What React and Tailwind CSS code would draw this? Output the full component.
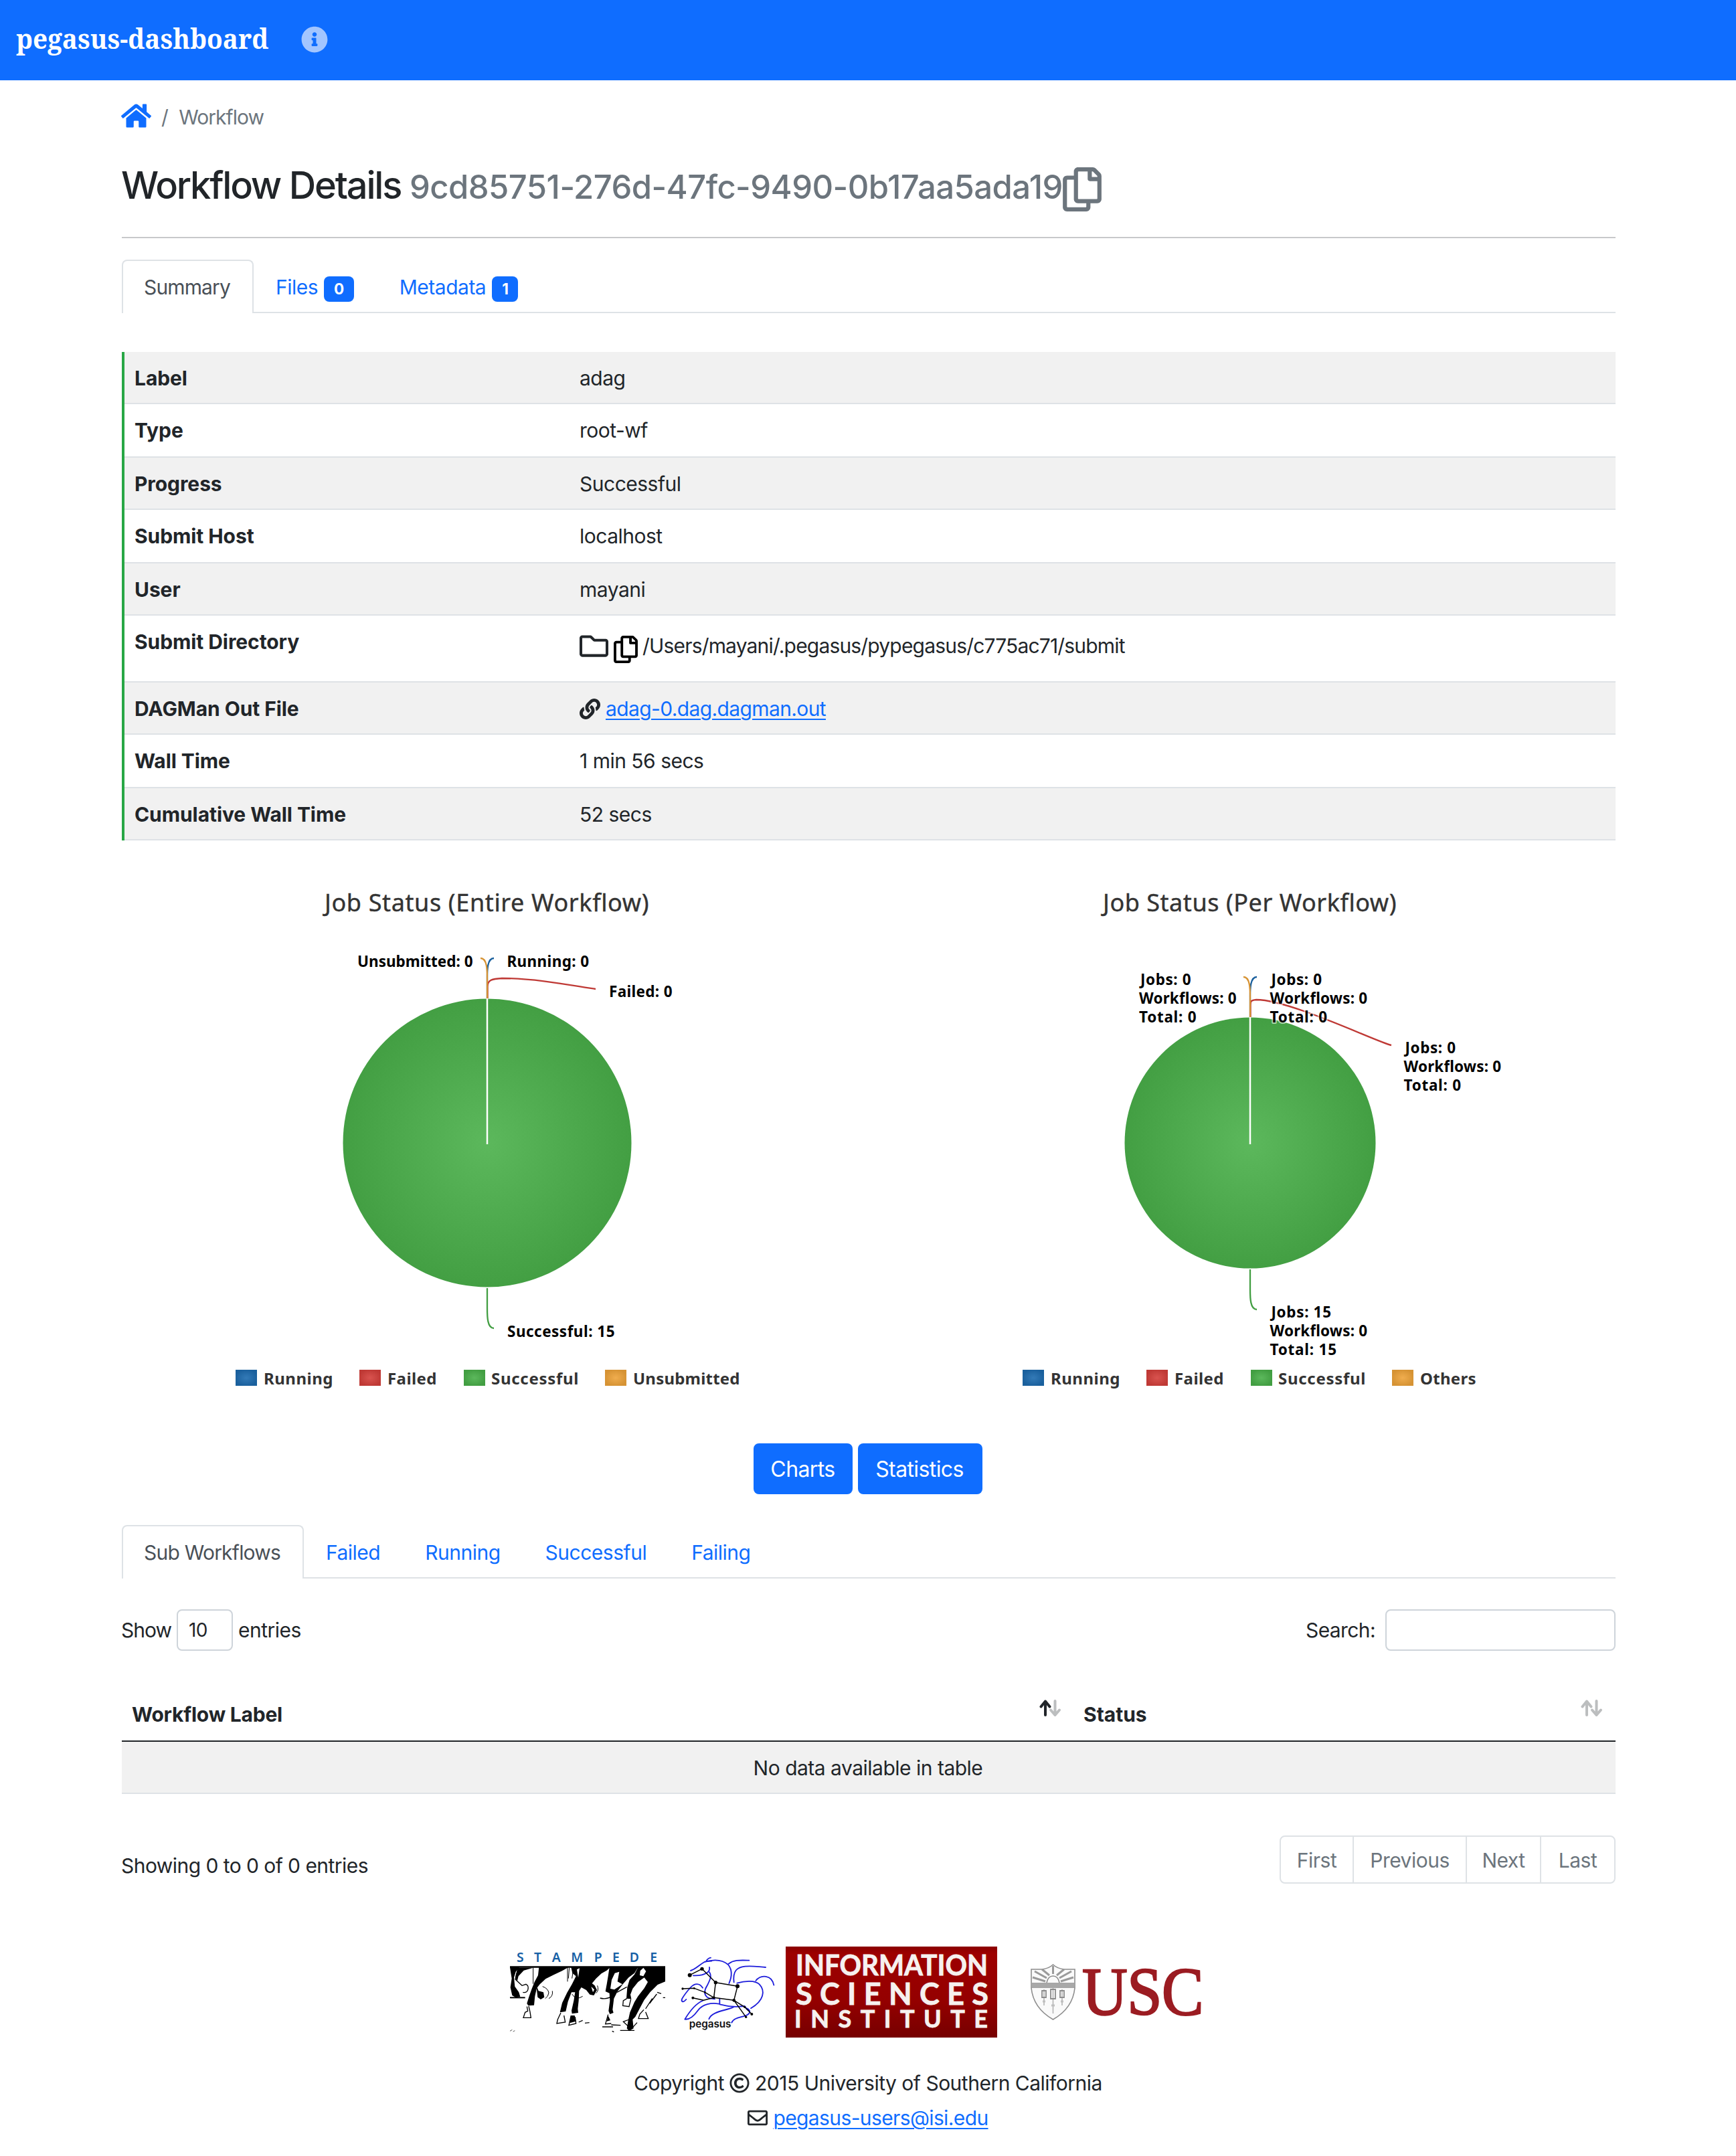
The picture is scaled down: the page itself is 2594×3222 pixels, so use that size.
import { FaInfoCircle, FaHome, FaRegCopy, FaRegFolder, FaLink, FaRegCopyright, FaRegEnvelope } from "react-icons/fa";

const details = [
  { label: "Label", value: "adag", h: "h-[78px]" },
  { label: "Type", value: "root-wf", h: "h-[80px]" },
  { label: "Progress", value: "Successful", h: "h-[78px]" },
  { label: "Submit Host", value: "localhost", h: "h-[80px]" },
  { label: "User", value: "mayani", h: "h-[78px]" },
  { label: "Submit Directory", kind: "dir", value: "/Users/mayani/.pegasus/pypegasus/c775ac71/submit", h: "h-[100px]" },
  { label: "DAGMan Out File", kind: "link", value: "adag-0.dag.dagman.out", h: "h-[78px]" },
  { label: "Wall Time", value: "1 min 56 secs", h: "h-[80px]" },
  { label: "Cumulative Wall Time", value: "52 secs", h: "h-[78px]" },
];

function DetailValue({ row }) {
  if (row.kind === "dir") {
    return (
      <div className="mt-[6px] flex h-[45px] items-center self-start">
        <FaRegFolder className="size-[43px]" />
        <FaRegCopy className="ml-[8px] h-[41px] w-[36px] translate-y-[5px] text-black" />
        <span className="ml-[7px] tracking-[-0.820px]">{row.value}</span>
      </div>
    );
  }
  if (row.kind === "link") {
    return (
      <div className="flex h-[45px] items-center self-start">
        <FaLink className="size-[31px]" />
        <a className="ml-[8px] tracking-[-0.620px] text-[#0f6dff] underline decoration-2 underline-offset-[4px]">{row.value}</a>
      </div>
    );
  }
  return <div>{row.value}</div>;
}

function DetailsTable() {
  return (
    <div className="mt-[58px]">
      {details.map((row, i) => (
        <div
          key={row.label}
          className={`flex border-l-4 border-l-[#28a745] ${row.h} ${i % 2 === 0 ? "bg-[#f1f1f1]" : "bg-white"}`}
        >
          <div className="flex w-full border-b-2 border-[#dee2e6] pt-[17px] pl-[15px]">
            <div className="w-[665px] shrink-0 font-bold tracking-[-0.080px]">{row.label}</div>
            <DetailValue row={row} />
          </div>
        </div>
      ))}
    </div>
  );
}

function Gradients({ id }) {
  const stops = { blue: ["#337ab7", "#1a609d"], red: ["#d9534f", "#bf3935"], green: ["#5cb85c", "#429e42"], orange: ["#f0ad4e", "#d69334"] };
  return (
    <defs>
      {Object.entries(stops).map(([name, [a, b]]) => (
        <radialGradient key={name} id={`${id}-${name}`} cx="0.5" cy="0.5" r="0.52">
          <stop offset="0" stopColor={a} />
          <stop offset="1" stopColor={b} />
        </radialGradient>
      ))}
    </defs>
  );
}

function ChartLabel({ x, y, w, children }) {
  return (
    <text x={x} y={y} textLength={w} fontSize="22.5" fontWeight="700" fill="#000" stroke="#fff" strokeOpacity="0.55" strokeWidth="4" paintOrder="stroke" strokeLinejoin="round">
      {children}
    </text>
  );
}

function Legend({ id, items }) {
  return items.map(([color, label, sx, tx, w]) => (
    <g key={label}>
      <rect x={sx} y="339" width="32" height="24" fill={`url(#${id}-${color})`} />
      <text x={tx} y="361" textLength={w} fontSize="24" fontWeight="700" fill="#333">{label}</text>
    </g>
  ));
}

/* Both charts use the centre of the pie as their origin. */
function Chart({ id, title, titleX, titleW, r, children, connectors, legend }) {
  return (
    <svg viewBox="-546 -452 1092 861" className="h-[861px] w-[1092px] font-['Noto_Sans',sans-serif]">
      <Gradients id={id} />
      <text x={titleX} y="-346" textLength={titleW} fontSize="36" fill="#333" stroke="#333" strokeWidth="0.400">{title}</text>
      <circle cx="0" cy="0" r={r} fill={`url(#${id}-green)`} />
      <line x1="0" y1={-r - 1} x2="0" y2="2" stroke="#fff" strokeWidth="2.5" />
      <g fill="none" strokeWidth="2.300">{connectors}</g>
      {children}
      <Legend id={id} items={legend} />
    </svg>
  );
}

function Charts() {
  return (
    <div className="grid grid-cols-2 gap-12">
      <Chart
        id="entire" title="Job Status (Entire Workflow)" titleX="-243" titleW="484" r="215.5"
        connectors={
          <>
            <path d="M10 -276C0 -276 0 -258 0 -246L0 -216" stroke="#1a609d" />
            <path d="M162 -230C142 -232 80 -246 22 -246C8 -245 0.500 -244 0.500 -234L0.500 -216" stroke="#bf3935" />
            <path d="M0 217L0 247C0 259 0 277 10 277" stroke="#429e42" />
            <path d="M-10 -276C0 -276 0 -258 0 -246L0 -216" stroke="#d69334" />
          </>
        }
        legend={[
          ["blue", "Running", -376, -334, 103],
          ["red", "Failed", -191, -149, 73],
          ["green", "Successful", -35, 6, 130],
          ["orange", "Unsubmitted", 176, 218, 159],
        ]}
      >
        <ChartLabel x="-194" y="-263.500" w="172">Unsubmitted: 0</ChartLabel>
        <ChartLabel x="29.500" y="-263.500" w="122">Running: 0</ChartLabel>
        <ChartLabel x="182" y="-218" w="94">Failed: 0</ChartLabel>
        <ChartLabel x="30" y="289.500" w="160">Successful: 15</ChartLabel>
      </Chart>
      <Chart
        id="per" title="Job Status (Per Workflow)" titleX="-220" titleW="438" r="187.5"
        connectors={
          <>
            <path d="M10 -248C0 -248 0 -230 0 -218L0 -188" stroke="#1a609d" />
            <path d="M211 -146C191 -150 60 -214 9 -214C1 -213 0.500 -212 0.500 -206L0.500 -188" stroke="#bf3935" />
            <path d="M0 189L0 219C0 231 0 249 10 249" stroke="#429e42" />
            <path d="M-10 -248C0 -248 0 -230 0 -218L0 -188" stroke="#d69334" />
          </>
        }
        legend={[
          ["blue", "Running", -340, -298, 103],
          ["red", "Failed", -155, -113, 73],
          ["green", "Successful", 1, 42, 130],
          ["orange", "Others", 212, 254, 83],
        ]}
      >
        {[[-166, -236, 0], [29.5, -236, 0], [229.5, -134, 0], [29.5, 261, 15]].map(([x, y, n]) => (
          <g key={`${x}:${y}`}>
            <ChartLabel x={x + 2} y={y} w={n ? 89 : 75}>{`Jobs: ${n}`}</ChartLabel>
            <ChartLabel x={x} y={y + 28} w="145">Workflows: 0</ChartLabel>
            <ChartLabel x={x} y={y + 56} w={n ? 99 : 85}>{`Total: ${n}`}</ChartLabel>
          </g>
        ))}
      </Chart>
    </div>
  );
}

function Badge({ children }) {
  return (
    <span className="flex h-[38px] items-center justify-center rounded-lg bg-[#0f6dff] px-[15px] text-[22.500px] leading-none font-bold text-white">
      {children}
    </span>
  );
}

function Tabs({ active, activeWidth, children }) {
  return (
    <div className="flex h-[80px]">
      <div className={`shrink-0 rounded-t-lg border-2 border-b-0 border-[#dee2e6] pt-[17px] pl-[31px] text-[#495057] ${activeWidth}`}>{active}</div>
      <div className="flex grow border-b-2 border-[#dee2e6] pt-[19px] text-[#0f6dff]">{children}</div>
    </div>
  );
}

function SortArrows({ up }) {
  return (
    <svg viewBox="0 0 36 26" className="h-[26px] w-[36px]" fill="none" strokeWidth="4" strokeLinecap="round" strokeLinejoin="round">
      <path d="M24.500 2V23M18 15.500L24.500 23L31 15.500" stroke="#bcbebf" />
      <path d="M10 23V2.500M3.500 10.500L10 2.500L16.500 10.500" stroke={up ? "#212529" : "#bcbebf"} />
    </svg>
  );
}

function StampedeLogo() {
  return (
    <svg viewBox="66 57 726 408" className="h-[136px] w-[242px]">
      <g fill="#1660a5" fontSize="58" fontWeight="600" className="font-['Noto_Sans',sans-serif]">
        {[["S", 96], ["T", 174], ["A", 254], ["M", 340], ["P", 443], ["E", 525], ["D", 602], ["E", 694]].map(([c, x]) => (
          <text key={x} x={x} y="125">{c}</text>
        ))}
      </g>
      <g fill="#000">
        <path d="M66 145H762V152H66Z" />
        <path d="M66 150H108L92 170L84 196L88 236L106 262L112 282L92 286L76 276L68 240L74 200Z" />
        <path d="M100 152H170L128 164L104 190L98 214L90 196Z" />
        <path d="M196 150H328L300 166L262 184L226 202L200 226L186 244L178 280L176 300L174 320L148 322L142 312L152 280L164 246L176 216L192 186Z" />
        <path d="M184 230L194 256L216 262L220 284L204 294L190 284Z" />
        <path d="M66 283H134V289H66Z" />
        <path d="M340 150H516L500 164L476 178L452 200L434 222L446 232L456 252L442 276L424 272L408 252L386 240L376 256L374 300L370 336L372 354L344 358L342 344L352 300L358 262L342 262L326 304L316 348L290 352L300 310L322 264L344 226L362 190L346 176Z" />
        <path d="M512 150H640L624 176L598 196L572 226L548 258L532 290L526 340L530 354L514 360L508 346L514 300L512 266L494 258L500 226L506 190Z" />
        <path d="M640 150H762V214L728 228L694 262L668 296L648 334L628 372L616 384L620 424L600 436L590 424L596 388L604 352L624 306L640 280L668 244L684 216L668 196L640 216L616 246L606 272L610 292L588 290L592 240L602 206L624 182Z" />
        <path d="M340 366L356 366L362 392L334 400Z" />
        <path d="M506 366L516 388L500 392Z" />
      </g>
      <g fill="#fff">
        <path d="M536 176L556 170L548 214L570 226L534 250L516 246L522 206Z" />
        <path d="M664 152L676 168L664 190L648 186L650 166Z" />
        <path d="M110 200L122 240L102 236Z" />
        <path d="M366 160L378 154L372 196Z" />
        <path d="M430 236L444 250L438 262Z" />
      </g>
      <g fill="none" stroke="#000" strokeWidth="4">
        <path d="M142 326L146 346L134 352L126 376H160L156 350L150 324M96 176L90 204L120 232L138 226Q152 232 146 252Q140 266 124 262" />
        <path d="M170 152V224M212 236Q236 244 240 264Q238 282 224 290M256 256Q260 280 240 290" strokeWidth="3" />
        <path d="M294 354L280 384L276 402L314 396L308 366M340 366L330 410L362 402L358 372M374 396L392 388M402 400L422 398" />
        <path d="M324 152V214M332 152L328 200M350 160L344 200M458 232Q466 254 452 266M344 270Q362 300 392 280" strokeWidth="3" />
        <path d="M506 362L494 404L520 402M480 417H528M520 408L562 410M524 436L532 440" />
        <path d="M590 290L574 300L572 322L600 326L608 292M600 384L574 394L602 420M560 433H624M612 424L636 398" />
        <path d="M666 340L648 360L642 380L686 380L674 350M674 336L704 290M692 312L724 270M546 262L590 238M470 288Q500 296 526 278M726 262L744 268M752 286H762" />
        <path d="M66 436L76 430M80 438L88 434" strokeWidth="2" />
      </g>
    </svg>
  );
}

function PegasusLogo() {
  return (
    <svg viewBox="792 57 510 408" className="h-[136px] w-[170px]" fill="none" strokeLinecap="round" strokeLinejoin="round">
      <g stroke="#1d1ddb" strokeWidth="5.500">
        <path d="M876 165C900 158 916 138 938 126C985 112 1020 118 1044 138C1062 160 1062 190 1048 222M946 122Q952 110 966 107M944 124L970 122" />
        <path d="M888 187C915 188 935 184 950 174C962 165 962 158 960 150M960 172C972 190 962 208 950 232C936 254 936 272 950 284C966 294 980 290 984 292" />
        <path d="M1046 134C1070 116 1096 118 1138 119M1070 217C1064 165 1084 150 1120 146C1150 142 1180 148 1212 150M1084 221C1120 210 1165 208 1184 226C1212 256 1204 300 1146 334M1168 210C1190 182 1240 182 1249 230" />
        <path d="M930 242C916 220 894 220 876 240C856 262 846 276 838 290C832 302 840 312 856 294M930 300C900 312 876 340 850 383C872 386 892 366 908 344C930 314 970 308 1002 314M1006 292V316C1040 324 1070 330 1118 324C1124 328 1120 336 1136 344M1068 328C1040 344 970 346 958 382M1060 398C1070 372 1110 376 1132 362C1146 354 1142 340 1128 334" />
      </g>
      <g stroke="#000" strokeWidth="4.500">
        <path d="M872 185L927 157L988 218L1086 235L1070 298L980 286L988 218M840 246L892 244L940 262L980 286L934 298L886 287M1070 298L1118 328L1150 360M1070 298L1124 373" />
      </g>
      <g fill="#000">
        {[[872, 185, 9], [927, 157, 8], [988, 218, 8], [1086, 235, 9], [1070, 298, 7], [980, 286, 6], [840, 246, 5], [886, 287, 6], [1150, 360, 6], [1124, 373, 5], [1118, 328, 5], [892, 244, 4], [940, 262, 4]].map(([x, y, r]) => (
          <circle key={`${x}-${y}`} cx={x} cy={y} r={r} />
        ))}
      </g>
      <text x="869" y="421" textLength="188" fontSize="46" fontWeight="600" fill="#111" className="font-['Inter',sans-serif]">pegasus</text>
    </svg>
  );
}

function IsiLogo() {
  return (
    <svg viewBox="0 0 316 136" className="h-[136px] w-[316px] font-['Lato',sans-serif] tracking-normal">
      <defs>
        <linearGradient id="isi-bg" x1="0" y1="0" x2="0" y2="1">
          <stop offset="0" stopColor="#8a0000" />
          <stop offset="0.08" stopColor="#9d0000" />
          <stop offset="0.6" stopColor="#940000" />
          <stop offset="1" stopColor="#760000" />
        </linearGradient>
      </defs>
      <rect width="316" height="136" fill="url(#isi-bg)" />
      <g fill="#f6f1ef" fontWeight="700" stroke="#f6f1ef" strokeWidth="0.800">
        <text x="15" y="43" fontSize="42" textLength="287" lengthAdjust="spacingAndGlyphs">INFORMATION</text>
        <text x="15" y="87" fontSize="45" textLength="288">SCIENCES</text>
        <text x="13" y="121" fontSize="36" textLength="289">INSTITUTE</text>
      </g>
    </svg>
  );
}

function UscLogo() {
  return (
    <svg viewBox="0 0 342 136" className="h-[136px] w-[342px]">
      <g fill="none" stroke="#8c8c8c" strokeWidth="1.600">
        <path d="M51 34H67Q77 33 83.500 27Q90 33 100 34H116V62Q113 92 83.500 109Q54 92 51 62Z" fill="#fafafa" />
        <path d="M52 55H115M51.500 61H115.500" />
        <path d="M52 58H115" strokeWidth="4" stroke="#a8a8a8" />
        <path d="M74 54Q76 44 83.500 44Q91 44 93 54" />
        <path d="M72 52L53 46M74 47L56 37M78 43L67 34M83.500 41V29M89 43L100 34M93 47L111 37M95 52L114 46" strokeWidth="3" stroke="#9a9a9a" />
        <path d="M70 64V88M83.500 62V100M97 64V88" stroke="#b4b4b4" />
        <path d="M67 66H73V76H67ZM80 64H87V78H80ZM94 66H100V76H94Z" strokeWidth="1.800" />
        <path d="M68 82H72M81 88H86M95 82H99" strokeWidth="3" stroke="#c0c0c0" />
      </g>
      <text x="127" y="102" textLength="181" fontSize="102" fill="#9b1c22" stroke="#9b1c22" strokeWidth="2.400" lengthAdjust="spacingAndGlyphs" className="font-['Liberation_Serif',serif]">
        USC
      </text>
    </svg>
  );
}

export default function App() {
  return (
    <div className="h-[3222px] w-[2594px] overflow-hidden bg-white font-['Inter',sans-serif] text-[30px] leading-[45px] tracking-[-0.500px] text-[#212529]">
      <nav className="flex h-[120px] items-center bg-[#0f6dff] pl-6">
        <span className="-mt-[6px] w-[377px] origin-left scale-x-[0.922] font-['Noto_Serif',serif] text-[42px] leading-[60px] font-bold tracking-normal whitespace-nowrap text-white">pegasus-dashboard</span>
        <FaInfoCircle className="-mt-[2px] ml-[49px] size-[40px] text-[#a2c5ff]" />
      </nav>

      <main className="ml-[182px] w-[2232px]">
        <div className="flex pt-[33px]">
          <FaHome className="-ml-px h-[40px] w-[45px] text-[#0f6dff]" />
          <span className="ml-[15px] text-[#6c757d]">/</span>
          <span className="ml-[16px] tracking-[-1px] text-[#6c757d]">Workflow</span>
        </div>

        <h1 className="mt-[44px] -ml-px flex h-[67px] items-baseline leading-[70px] font-medium whitespace-nowrap">
          <span className="w-[431px] text-[56px] tracking-[-2.200px]">Workflow Details</span>
          <span className="text-[49px] tracking-[-0.540px] text-[#6c757d]">9cd85751-276d-47fc-9490-0b17aa5ada19</span>
          <FaRegCopy className="mt-[8px] h-[66px] w-[58px] self-start text-[#6c757d]" />
        </h1>
        <hr className="mt-[45px] mb-8 border-t-2 border-[#c8c9ca]" />

        <Tabs active="Summary" activeWidth="w-[197px] tracking-[-0.860px]">
          <div className="flex gap-[9px] pl-[33px]"><span>Files</span><span className="pt-[6px]"><Badge>0</Badge></span></div>
          <div className="flex gap-[9px] pl-[68px]"><span>Metadata</span><span className="pt-[6px]"><Badge>1</Badge></span></div>
        </Tabs>

        <DetailsTable />
        <Charts />

        <div className="mt-[40px] flex justify-center gap-2 pr-[2px] text-[32px] tracking-[-0.600px] text-white">
          <button className="h-[76px] w-[148px] rounded-lg bg-[#0f6dff] pr-px">Charts</button>
          <button className="h-[76px] w-[186px] rounded-lg bg-[#0f6dff] pr-[2px]">Statistics</button>
        </div>

        <div className="mt-[46px]">
          <Tabs active="Sub Workflows" activeWidth="w-[272px] tracking-[-0.780px]">
            <span className="ml-[33px]">Failed</span>
            <span className="ml-[67px]">Running</span>
            <span className="ml-[67px]">Successful</span>
            <span className="ml-[67px]">Failing</span>
          </Tabs>
        </div>

        <div className="mt-[46px] flex h-[62px] items-center justify-between">
          <div className="-ml-px flex items-center">
            <span className="tracking-[-1px]">Show</span>
            <span className="mx-2 flex h-[62px] w-[84px] items-center rounded-lg border-2 border-[#ced4da] pl-4 text-[28px]">10</span>
            <span>entries</span>
          </div>
          <div className="flex items-center">
            <span className="tracking-[-0.600px]">Search:</span>
            <input className="ml-[15px] h-[62px] w-[344px] rounded-lg border-2 border-[#ced4da] bg-white" />
          </div>
        </div>

        <div className="mt-[57px] flex h-[79px] border-b-2 border-[#212529] pt-4 pl-[15px] font-bold">
          <div className="flex w-[1422px] justify-between tracking-[-0.220px]">
            <span>Workflow Label</span>
            <span className="mr-[31px]"><SortArrows up /></span>
          </div>
          <div className="flex grow justify-between tracking-normal">
            <span>Status</span>
            <span className="mr-[17px]"><SortArrows /></span>
          </div>
        </div>
        <div className="h-[78px] border-b-2 border-[#dee2e6] bg-[#f1f1f1] pt-[17px] pr-[2px] text-center">No data available in table</div>

        <div className="mt-[62px] flex h-[72px] justify-between">
          <span className="-ml-px pt-[23px] tracking-[-0.550px]">Showing 0 to 0 of 0 entries</span>
          <div className="flex divide-x-2 divide-[#dee2e6] rounded-lg border-2 border-[#dee2e6] text-center leading-[70px] text-[#6c757d]">
            <span className="w-[109px]">First</span>
            <span className="w-[169px]">Previous</span>
            <span className="w-[111px]">Next</span>
            <span className="w-[109px]">Last</span>
          </div>
        </div>
      </main>

      <footer className="mt-[94px]">
        <div className="flex pl-[762px]">
          <StampedeLogo />
          <PegasusLogo />
          <IsiLogo />
          <UscLogo />
        </div>
        <div className="mt-[42px] flex h-[52px] items-center justify-center leading-[52px]">
          <span>Copyright</span>
          <FaRegCopyright className="mx-[8px] size-[30px]" />
          <span>2015 University of Southern California</span>
        </div>
        <div className="flex h-[52px] items-center justify-center leading-[52px]">
          <FaRegEnvelope className="mr-[8px] size-[30px]" />
          <a className="tracking-[-0.620px] text-[#0f6dff] underline decoration-2 underline-offset-[4px]">pegasus-users@isi.edu</a>
        </div>
      </footer>
    </div>
  );
}
